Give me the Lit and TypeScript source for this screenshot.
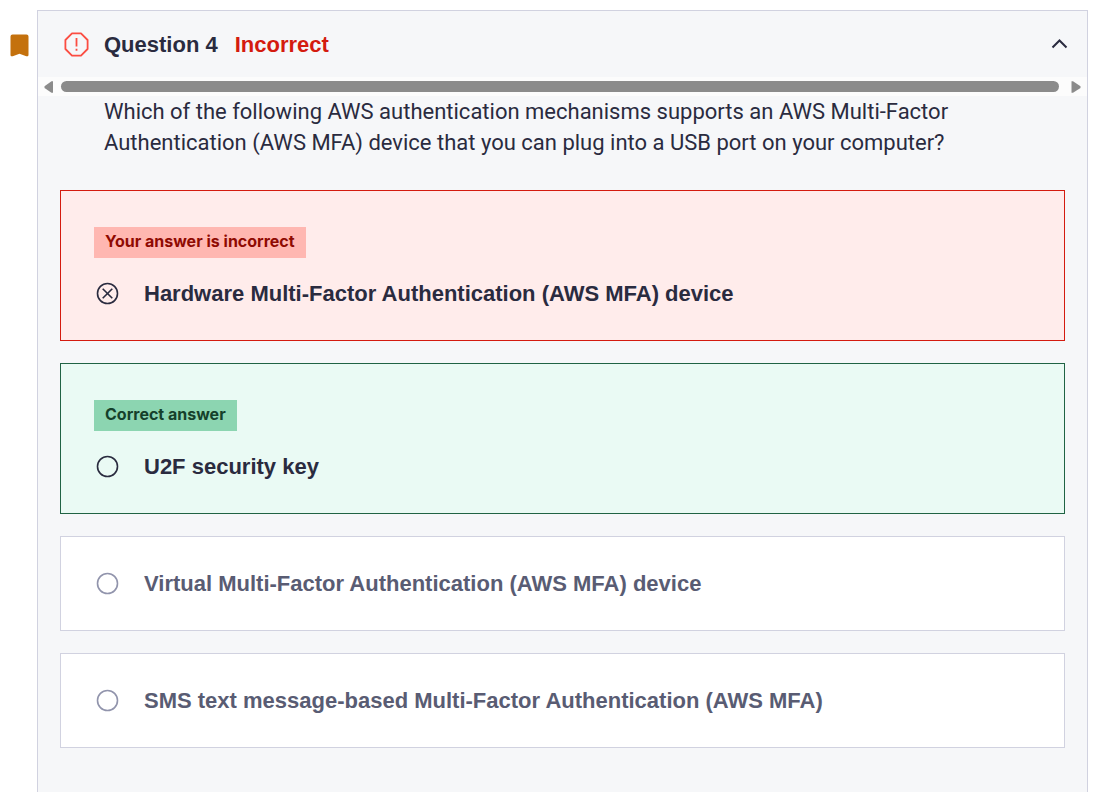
import { LitElement, html, css, svg, nothing } from "lit";
import { customElement, property, state } from "lit/decorators.js";

type Verdict = "incorrect" | "correct" | "neutral";

interface Answer {
  text: string;
  verdict: Verdict;
  note?: string;
  chosen?: boolean;
}

const ANSWERS: Answer[] = [
  {
    text: "Hardware Multi-Factor Authentication (AWS MFA) device",
    verdict: "incorrect",
    note: "Your answer is incorrect",
    chosen: true,
  },
  { text: "U2F security key", verdict: "correct", note: "Correct answer" },
  { text: "Virtual Multi-Factor Authentication (AWS MFA) device", verdict: "neutral" },
  { text: "SMS text message-based Multi-Factor Authentication (AWS MFA)", verdict: "neutral" },
];

@customElement("answer-option")
export class AnswerOption extends LitElement {
  @property({ attribute: false }) answer!: Answer;
  @property() optionId = "";

  static styles = css`
    :host {
      display: block;
      font-family: "Liberation Sans", Arial, sans-serif;
    }
    .card {
      padding: 30px 33px;
      border: 1px solid #d1d2e0;
      background: #fff;
      color: #595c73;
    }
    .card.incorrect {
      padding-top: 36px;
      border-color: #d41b0f;
      background: #ffeceb;
      color: #2a2b3f;
    }
    .card.correct {
      padding-top: 36px;
      border-color: #206344;
      background: #eafaf4;
      color: #2a2b3f;
    }
    .note {
      width: fit-content;
      padding: 0 11px 2px;
      margin-bottom: 19px;
      font-family: "Inter", sans-serif;
      font-size: 16px;
      font-weight: 700;
      line-height: 29px;
    }
    .incorrect .note {
      background: #ffb7b1;
      color: #8f0a02;
    }
    .correct .note {
      background: #8cd5b1;
      color: #15402b;
    }
    .row {
      display: flex;
      align-items: center;
      gap: 23px;
      min-height: 33px;
    }
    .mark {
      display: grid;
      flex: none;
      width: 27px;
      height: 27px;
      color: #9194ac;
    }
    .incorrect .mark,
    .correct .mark {
      color: #2a2b3f;
    }
    .mark > * {
      grid-area: 1 / 1;
      width: 27px;
      height: 27px;
      margin: 0;
    }
    .mark input {
      appearance: none;
    }
    .label {
      font-size: 22px;
      font-weight: 700;
      line-height: 31px;
    }
  `;

  render() {
    const { text, verdict, note, chosen } = this.answer;
    return html`
      <div class="card ${verdict}">
        ${note ? html`<div class="note">${note}</div>` : nothing}
        <div class="row">
          <span class="mark">
            <svg viewBox="0 0 27 27" fill="none" stroke="currentColor" stroke-width="1.6" aria-hidden="true">
              <circle cx="13.5" cy="13.5" r="10" />
              ${chosen ? svg`<path d="M8.7 8.7l9.6 9.6M18.3 8.7l-9.6 9.6" />` : nothing}
            </svg>
            <input type="radio" id=${this.optionId} name="answer" ?checked=${!!chosen} disabled />
          </span>
          <label class="label" for=${this.optionId}>${text}</label>
        </div>
      </div>
    `;
  }
}

@customElement("app-root")
export class AppRoot extends LitElement {
  @state() private open = true;

  static styles = css`
    :host {
      display: flex;
      box-sizing: border-box;
      min-height: 100vh;
      padding: 10px 21px 0 10px;
      background: #fff;
      color: #2a2b3f;
      font-family: "Roboto", "Liberation Sans", sans-serif;
    }
    .bookmark {
      flex: none;
      width: 19px;
      height: 23px;
      margin: 24px 8px 0 0;
    }
    .panel {
      flex: 1;
      min-width: 0;
      border: 1px solid #d1d2e0;
      border-bottom: 0;
      background: #f6f7f9;
    }
    .heading {
      margin: 0;
    }
    .toggle {
      display: flex;
      align-items: center;
      width: 100%;
      height: 66px;
      padding: 0 19px 0 26px;
      border: 0;
      background: none;
      color: inherit;
      font-family: "Liberation Sans", Arial, sans-serif;
      font-size: 22px;
      font-weight: 700;
      line-height: 31px;
      text-align: left;
      cursor: pointer;
    }
    .alert {
      flex: none;
      width: 25px;
      height: 25px;
      margin-right: 15px;
    }
    .result {
      margin-left: 17px;
      color: #d41b0f;
    }
    .chevron {
      flex: none;
      width: 17px;
      height: 17px;
      margin-left: auto;
    }
    .scroller {
      display: flex;
      align-items: center;
      gap: 7px;
      height: 19px;
      padding: 0 6px;
      background: #fcfcfc;
    }
    .arrow {
      flex: none;
      width: 10px;
      height: 12px;
      fill: #8b8b8b;
    }
    .thumb {
      flex: 1;
      height: 11px;
      border-radius: 6px;
      background: #8b8b8b;
    }
    .thumb + .arrow {
      margin-left: 5px;
    }
    .prompt {
      max-width: 872px;
      margin: 0;
      padding: 0 22px 32px 66px;
      font-size: 22px;
      line-height: 31px;
    }
    .answers {
      display: grid;
      gap: 22px;
      padding: 0 22px 43px;
    }
  `;

  private toggle() {
    this.open = !this.open;
  }

  render() {
    return html`
      <svg class="bookmark" viewBox="0 0 19 23" aria-hidden="true">
        <path d="M2.5 0.5h14a2 2 0 0 1 2 2v18.3c0 1.4-1 1.8-2.2 1.4L9.5 19.7l-6.8 2.5C1.5 22.6.5 22.2.5 20.8V2.5a2 2 0 0 1 2-2z" fill="#c4710d" />
      </svg>
      <section class="panel">
        <h2 class="heading">
          <button class="toggle" aria-expanded=${this.open} @click=${this.toggle}>
            <svg class="alert" viewBox="0 0 25 25" fill="none" stroke="#fb4d42" stroke-width="1.8" aria-hidden="true">
              <path d="M8 1.4h9L23.6 8v9L17 23.6H8L1.4 17V8z" stroke-linejoin="round" />
              <path d="M12.5 6v8.5M12.5 16.8v2" />
            </svg>
            <span>Question 4</span>
            <span class="result">Incorrect</span>
            <svg class="chevron" viewBox="0 0 17 17" fill="none" stroke="currentColor" stroke-width="2" aria-hidden="true">
              <path d=${this.open ? "M1.5 11.5l7-7 7 7" : "M1.5 5.5l7 7 7-7"} />
            </svg>
          </button>
        </h2>
        ${this.open
          ? html`
              <div class="scroller" aria-hidden="true">
                <svg class="arrow" viewBox="0 0 10 12"><path d="M9 0.3v11.4H7.5L0.5 7V5.3L7.5 0.3z" /></svg>
                <div class="thumb"></div>
                <svg class="arrow" viewBox="0 0 10 12"><path d="M0.5 0.3v11.4H2L9.5 7V5.3L2 0.3z" /></svg>
              </div>
              <p class="prompt">
                Which of the following AWS authentication mechanisms supports an AWS Multi-Factor
                Authentication (AWS MFA) device that you can plug into a USB port on your computer?
              </p>
              <div class="answers">
                ${ANSWERS.map(
                  (a, i) => html`<answer-option .answer=${a} .optionId=${`answer-${i}`}></answer-option>`
                )}
              </div>
            `
          : nothing}
      </section>
    `;
  }
}
